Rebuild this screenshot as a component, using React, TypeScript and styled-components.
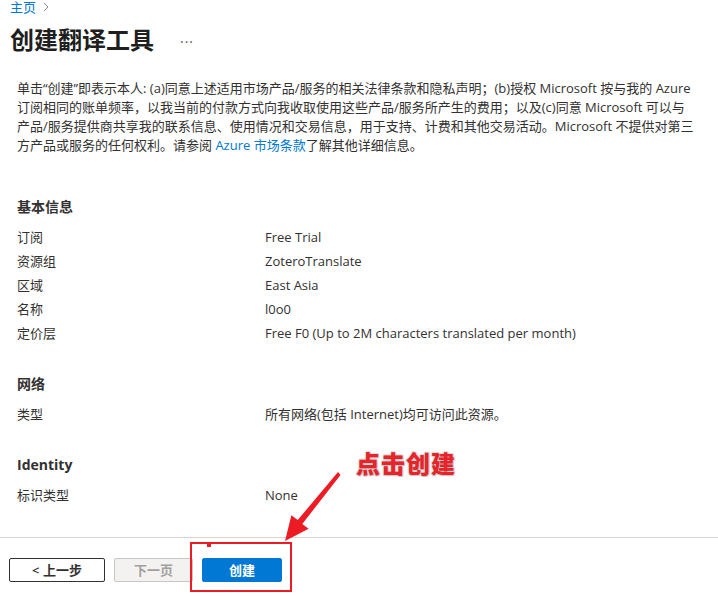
import React from "react";
import styled, { createGlobalStyle } from "styled-components";

const FONT = `"Segoe UI", "Open Sans", "Noto Sans CJK SC", sans-serif`;

const GlobalStyle = createGlobalStyle`
  html, body { margin: 0; padding: 0; background: #ffffff; }
  body {
    font-family: ${FONT};
    color: #323130;
    -webkit-font-smoothing: antialiased;
  }
  * { box-sizing: border-box; }
`;

const Page = styled.div`
  position: relative;
  width: 718px;
  height: 596px;
  display: flex;
  flex-direction: column;
  overflow: hidden;
`;

const Header = styled.header`
  padding: 0 10px;
  display: flex;
  flex-direction: column;
`;

const Breadcrumb = styled.nav`
  display: flex;
  align-items: center;
  gap: 6px;
  height: 14px;
  font-size: 13px;
  line-height: 14px;
`;

const Crumb = styled.a`
  color: #0078d4;
  text-decoration: none;
`;

const Chevron = styled.svg`
  width: 8px;
  height: 10px;
`;

const TitleRow = styled.div`
  display: flex;
  align-items: center;
  margin-top: 10px;
  height: 32px;
  gap: 26px;
`;

const Title = styled.h1`
  margin: 0;
  font-size: 24px;
  line-height: 32px;
  font-weight: 600;
  color: #201f1e;
`;

const More = styled.span`
  font-size: 14px;
  color: #605e5c;
  letter-spacing: 1px;
  padding-top: 2px;
`;

const Content = styled.main`
  flex: 1;
  padding: 0 4px 0 17px;
`;

const Terms = styled.p`
  margin: 23px 0 0;
  font-size: 13px;
  line-height: 19px;
  white-space: nowrap;
`;

const Link = styled.a`
  color: #0078d4;
  text-decoration: none;
`;

const Section = styled.section<{ $first?: boolean }>`
  margin-top: ${(p) => (p.$first ? "42px" : "29px")};
`;

const SectionTitle = styled.h2`
  margin: 0 0 8px;
  font-size: 14px;
  line-height: 20px;
  font-weight: 700;
  color: #323130;
`;

const Row = styled.div`
  display: grid;
  grid-template-columns: 248px 1fr;
  height: 24px;
  align-items: center;
  font-size: 13px;
  line-height: 24px;
`;

const Label = styled.span`
  color: #323130;
`;

const Value = styled.span`
  color: #323130;
`;

const Footer = styled.footer`
  border-top: 1px solid #d6d4d2;
  padding: 20px 9px 14px;
  display: flex;
  gap: 9px;
`;

const Button = styled.button<{ $variant: "default" | "disabled" | "primary"; $w: number }>`
  width: ${(p) => p.$w}px;
  height: 24px;
  border-radius: 2px;
  font-family: ${FONT};
  font-size: 13px;
  font-weight: 600;
  line-height: 20px;
  padding: 0;
  display: flex;
  align-items: center;
  justify-content: center;
  border: 1px solid
    ${(p) =>
      p.$variant === "default" ? "#323130" : p.$variant === "disabled" ? "#c8c6c4" : "#0078d4"};
  background: ${(p) =>
    p.$variant === "primary" ? "#0078d4" : p.$variant === "disabled" ? "#f3f2f1" : "#ffffff"};
  color: ${(p) =>
    p.$variant === "primary" ? "#ffffff" : p.$variant === "disabled" ? "#a19f9d" : "#323130"};
`;

const HighlightBox = styled.div`
  position: absolute;
  left: 190px;
  top: 542px;
  width: 102px;
  height: 50px;
  border: 2px solid #ed1c24;
  pointer-events: none;
`;

const Dot = styled.div`
  position: absolute;
  left: 207px;
  top: 544px;
  width: 4px;
  height: 3px;
  background: #ed1c24;
`;

const ArrowSvg = styled.svg`
  position: absolute;
  left: 270px;
  top: 460px;
  width: 80px;
  height: 90px;
  overflow: visible;
`;

const Callout = styled.div`
  position: absolute;
  left: 356px;
  top: 450px;
  font-family: "Noto Sans CJK SC", sans-serif;
  font-size: 24px;
  line-height: 26px;
  font-weight: 900;
  color: #e8232a;
  letter-spacing: 1px;
  text-shadow: 0 0 1px #bdbdbd, 1px 1px 1px #c8c8c8, -1px -1px 1px #e0e0e0, 1px -1px 1px #d8d8d8,
    -1px 1px 1px #d8d8d8;
`;

const basics: [string, string][] = [
  ["订阅", "Free Trial"],
  ["资源组", "ZoteroTranslate"],
  ["区域", "East Asia"],
  ["名称", "l0o0"],
  ["定价层", "Free F0 (Up to 2M characters translated per month)"],
];

export default function App() {
  return (
    <>
      <GlobalStyle />
      <Page>
        <Header>
          <Breadcrumb>
            <Crumb href="#">主页</Crumb>
            <Chevron viewBox="0 0 8 10">
              <path d="M2 1 L6 5 L2 9" fill="none" stroke="#8a8886" strokeWidth="1" />
            </Chevron>
          </Breadcrumb>
          <TitleRow>
            <Title>创建翻译工具</Title>
            <More>···</More>
          </TitleRow>
        </Header>
        <Content>
          <Terms>
            单击“创建”即表示本人: (a)同意上述适用市场产品/服务的相关法律条款和隐私声明；(b)授权 Microsoft 按与我的 Azure
            <br />
            订阅相同的账单频率，以我当前的付款方式向我收取使用这些产品/服务所产生的费用；以及(c)同意 Microsoft 可以与
            <br />
            产品/服务提供商共享我的联系信息、使用情况和交易信息，用于支持、计费和其他交易活动。Microsoft 不提供对第三
            <br />
            方产品或服务的任何权利。请参阅 <Link href="#">Azure 市场条款</Link>了解其他详细信息。
          </Terms>
          <Section $first>
            <SectionTitle>基本信息</SectionTitle>
            {basics.map(([k, v]) => (
              <Row key={k}>
                <Label>{k}</Label>
                <Value>{v}</Value>
              </Row>
            ))}
          </Section>
          <Section>
            <SectionTitle>网络</SectionTitle>
            <Row>
              <Label>类型</Label>
              <Value>所有网络(包括 Internet)均可访问此资源。</Value>
            </Row>
          </Section>
          <Section>
            <SectionTitle>Identity</SectionTitle>
            <Row>
              <Label>标识类型</Label>
              <Value>None</Value>
            </Row>
          </Section>
        </Content>
        <Footer>
          <Button $variant="default" $w={96}>&lt; 上一步</Button>
          <Button $variant="disabled" $w={79} disabled>
            下一页
          </Button>
          <Button $variant="primary" $w={80}>创建</Button>
        </Footer>
        <HighlightBox />
        <Dot />
        <ArrowSvg viewBox="270 460 80 90">
          <polygon
            points="338,472 340.5,475 302.3,523.9 308.6,528.8 285,541 291.4,515.2 297.7,520.1"
            fill="#ed1c24"
          />
        </ArrowSvg>
        <Callout>点击创建</Callout>
      </Page>
    </>
  );
}
